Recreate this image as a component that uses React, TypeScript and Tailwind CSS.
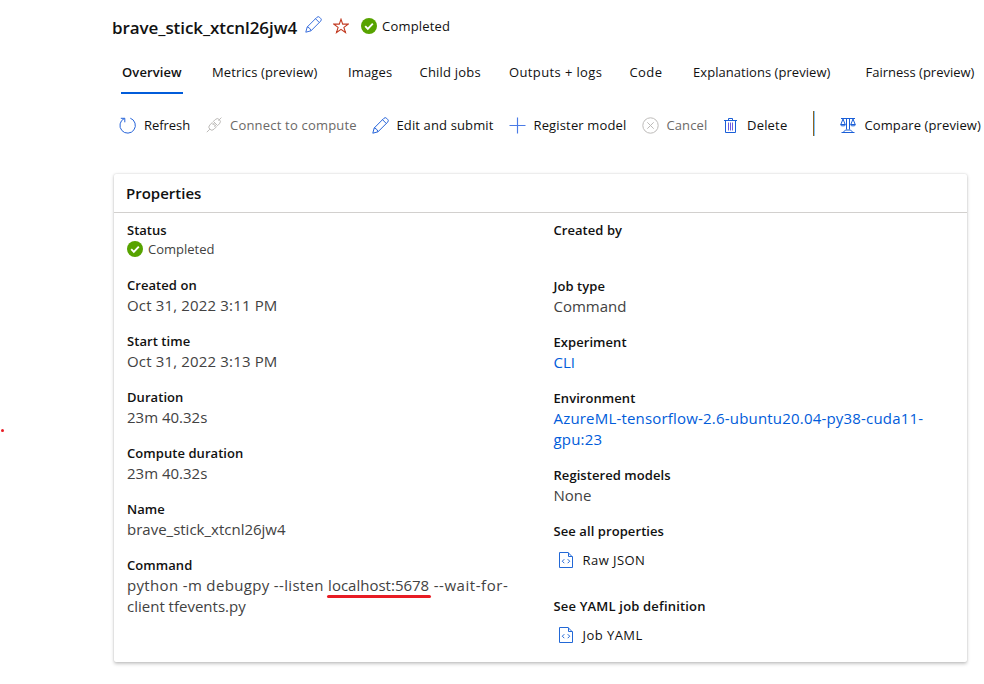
import type { ReactNode } from "react";

type IconProps = { className?: string };

function Pencil({ className = "" }: IconProps) {
  return (
    <svg className={className} width="17" height="17" viewBox="0 0 17 17" fill="none" stroke="currentColor" strokeWidth="1">
      <path d="M.8 16.2 2.2 11 11.8 1.4a2 2 0 0 1 2.9 0l.9.9a2 2 0 0 1 0 2.9L6 14.8Z" />
      <path d="m10.5 2.7 3.8 3.8M2.2 11l1.8.6.4 1 1 .4.6 1.8" />
    </svg>
  );
}

function Star() {
  return (
    <svg width="16" height="16" viewBox="0 0 16 16" fill="none" stroke="#c23b22" strokeWidth="1.1">
      <path d="M8 1.2 9.7 6.1H15.2l-4.3 3.3 1.6 5.1L8 11.3l-4.5 3.2 1.6-5.1L.8 6.1h5.5Z" />
    </svg>
  );
}

function Done() {
  return (
    <svg width="16" height="16" viewBox="0 0 16 16" fill="none">
      <circle cx="8" cy="8" r="8" fill="#57a300" />
      <path d="m4.2 8.2 2.6 2.6 5-5.2" stroke="#fff" strokeWidth="1.9" />
    </svg>
  );
}

function Refresh() {
  return (
    <svg width="17" height="17" viewBox="0 0 17 17" fill="none" stroke="#2563d9" strokeWidth="1">
      <path d="M11.3 1.2A7.7 7.7 0 1 1 5.3 1.5M1.8 1.3h4v4" />
    </svg>
  );
}

function Plug() {
  return (
    <svg width="16" height="16" viewBox="0 0 16 16" fill="none" stroke="#bdbbb9" strokeWidth="1">
      <path d="m.8 15.2 3-3M12.4 3.6l3-3M6.2 5.6 3.8 8a2.9 2.9 0 0 0 0 4.2 2.9 2.9 0 0 0 4.2 0l2.4-2.4ZM7.4 4.4 9.2 2.6a2.9 2.9 0 0 1 4.2 0 2.9 2.9 0 0 1 0 4.2l-1.8 1.8ZM6.6 8l1.6-1.6M8.2 9.6 9.8 8" />
    </svg>
  );
}

function Plus() {
  return (
    <svg width="17" height="17" viewBox="0 0 17 17" fill="none" stroke="#4a7be6" strokeWidth="1.15">
      <path d="M.5 8.5h16M8.5.5v16" />
    </svg>
  );
}

function CancelIcon() {
  return (
    <svg width="17" height="17" viewBox="0 0 17 17" fill="none" stroke="#bdbbb9" strokeWidth="1">
      <circle cx="8.5" cy="8.5" r="7.7" />
      <path d="m5.3 5.3 6.4 6.4m0-6.4-6.4 6.4" />
    </svg>
  );
}

function Trash() {
  return (
    <svg width="13" height="17" viewBox="0 0 13 17" fill="none" stroke="#1a5fd8" strokeWidth="1">
      <path d="M0 3.5h13M4.5 3V1.5h4V3M1.5 3.5v12h10v-12" />
      <path d="M4.5 5.5v8M6.5 5.5v8M8.5 5.5v8" stroke="#6a5be0" />
    </svg>
  );
}

function Scales() {
  return (
    <svg width="16" height="16" viewBox="0 0 16 16" fill="none" stroke="#1a5fd8" strokeWidth="1">
      <path d="M1 1.5h14M6.5 1.5v11M9.5 1.5v11M3 2 1 7M3 2l2 5M13 2l-2 5M13 2l2 5M.5 7.5h5l-.9 1.3H1.4ZM10.5 7.5h5l-.9 1.3h-3.2ZM1.5 15.5h13M3.5 15l2-2h5l2 2" />
    </svg>
  );
}

function CodeFile() {
  return (
    <svg width="14" height="16" viewBox="0 0 14 16" fill="none" stroke="#2268d6" strokeWidth="1">
      <path d="M.5.5H9l4.5 4.5v10.5H.5ZM9.5 .5V4.5h4M5.3 7.2 3.3 9.2l2 2M8.7 7.2l2 2-2 2" />
    </svg>
  );
}

const tabs = [
  { label: "Overview", cls: "w-[60px] mr-[30px] font-semibold tracking-[0.1px]" },
  { label: "Metrics (preview)", cls: "w-[106px] mr-[30px] tracking-[0.12px]" },
  { label: "Images", cls: "w-[45px] mr-[26.5px] tracking-[0.15px]" },
  { label: "Child jobs", cls: "w-[62px] mr-[27.5px] tracking-[0.2px]" },
  { label: "Outputs + logs", cls: "w-[94px] mr-[26.5px] tracking-[0.38px]" },
  { label: "Code", cls: "w-[33px] mr-[30.5px] tracking-[0.4px]" },
  { label: "Explanations (preview)", cls: "w-[138px] mr-[34.5px] tracking-[0.05px]" },
  { label: "Fairness (preview)", cls: "w-[110px]" },
];

function Tool({ icon, children, cls, off }: { icon: ReactNode; children: string; cls: string; off?: boolean }) {
  return (
    <button className={`flex shrink-0 items-center whitespace-nowrap ${off ? "text-[#6b6967]" : "text-[#111]"} ${cls}`}>
      {icon}
      <span className="pt-px">{children}</span>
    </button>
  );
}

function Field({ label, children, cls = "" }: { label: string; children?: ReactNode; cls?: string }) {
  return (
    <div className="mb-[15px]">
      <dt className="h-5 leading-5 font-semibold tracking-[0.06px] whitespace-nowrap text-[#111]">{label}</dt>
      <dd className={`min-h-[21px] text-[15px] leading-[21px] text-[#424242] ${cls}`}>{children}</dd>
    </div>
  );
}

export default function App() {
  return (
    <div className="relative h-[684px] w-[984px] overflow-hidden bg-white pl-[112px] font-['Open_Sans','Noto_Sans',sans-serif] text-[13px] text-[#111]">
      <header className="flex h-[52px] items-center">
        <h1 className="w-[193px] pt-[3px] text-[17px] leading-6 font-semibold tracking-[-0.08px] whitespace-nowrap">brave_stick_xtcnl26jw4</h1>
        <Pencil className="mr-[11px] mb-[3px] text-[#3a6fdd]" />
        <Star />
        <span className="ml-3 flex items-center gap-[5px] tracking-[0.2px]"><Done /><span className="pt-px">Completed</span></span>
      </header>

      <nav className="flex h-[42px] pl-[10px]">
        {tabs.map((t, i) => (
          <a key={t.label} className={`relative block shrink-0 leading-10 whitespace-nowrap ${t.cls}`}>
            {t.label}
            {i === 0 && <span className="absolute -right-px bottom-0 -left-px h-0.5 bg-[#015cda]" />}
          </a>
        ))}
      </nav>

      <div className="flex h-[62px] items-center pl-[7px]">
        <Tool cls="w-[87px] gap-2 tracking-[-0.05px]" icon={<Refresh />}>Refresh</Tool>
        <Tool cls="w-[166px] gap-2 tracking-[0.2px]" off icon={<Plug />}>Connect to compute</Tool>
        <Tool cls="w-[137px] gap-[7.5px] tracking-[0.13px]" icon={<Pencil className="text-[#2563d9]" />}>Edit and submit</Tool>
        <Tool cls="w-[133px] gap-[7.5px] tracking-[0.15px]" icon={<Plus />}>Register model</Tool>
        <Tool cls="w-[82px] gap-[7.5px] tracking-[0.1px]" off icon={<CancelIcon />}>Cancel</Tool>
        <Tool cls="w-[89px] gap-[10px] tracking-[0.2px]" icon={<Trash />}>Delete</Tool>
        <span className="mr-[25px] mb-[3px] h-[25px] w-0.5 shrink-0 border-r border-[#7cc3fb] bg-[#93621f]" />
        <Tool cls="gap-[8.5px] tracking-[0.11px]" icon={<Scales />}>Compare (preview)</Tool>
      </div>

      <section className="mt-[18px] ml-[2px] h-[488px] w-[853px] rounded-[2px] bg-white shadow-[0_1.6px_3.6px_rgba(0,0,0,0.22),0_0_2px_rgba(0,0,0,0.12)]">
        <h2 className="h-[39px] border-b border-[#d2d0ce] pl-3 text-[15px] leading-[38px] font-semibold">Properties</h2>
        <div className="flex pt-[7px] pl-[13px]">
          <dl className="w-[426.5px]">
            <div className="mb-4">
              <dt className="h-[19px] leading-5 font-semibold">Status</dt>
              <dd className="flex h-5 items-center gap-[5px] text-[#424242]"><Done /><span className="pt-px">Completed</span></dd>
            </div>
            <Field label="Created on" cls="tracking-[0.16px]">Oct 31, 2022 3:11 PM</Field>
            <Field label="Start time" cls="tracking-[0.16px]">Oct 31, 2022 3:13 PM</Field>
            <Field label="Duration">23m 40.32s</Field>
            <Field label="Compute duration">23m 40.32s</Field>
            <Field label="Name">brave_stick_xtcnl26jw4</Field>
            <Field label="Command">
              <span className="tracking-[0.34px]">python -m debugpy --listen </span>
              <span className="relative">
                localhost:5678
                <span className="absolute -right-[2px] -bottom-[3px] -left-px h-[3px] rounded-full bg-[#e81c24]" />
              </span>
              <span className="tracking-[0.55px]"> --wait-for-</span>
              <br />
              <span>client tfevents.py</span>
            </Field>
          </dl>
          <dl className="w-[400px]">
            <Field label="Created by" />
            <Field label="Job type">Command</Field>
            <Field label="Experiment"><a className="text-[#015cda]">CLI</a></Field>
            <Field label="Environment" cls="tracking-[0.19px]">
              <a className="text-[#015cda]">AzureML-tensorflow-2.6-ubuntu20.04-py38-cuda11-<br />gpu:23</a>
            </Field>
            <Field label="Registered models">None</Field>
            <div className="mb-[26px]">
              <dt className="h-5 leading-5 font-semibold tracking-[0.08px]">See all properties</dt>
              <dd className="mt-[9px] flex h-5 items-center gap-[9.5px] pl-[5.5px] tracking-[0.45px]"><CodeFile /><span className="pt-px">Raw JSON</span></dd>
            </div>
            <div>
              <dt className="h-5 leading-5 font-semibold tracking-[0.18px]">See YAML job definition</dt>
              <dd className="mt-[9px] flex h-5 items-center gap-[9.5px] pl-[5.5px] tracking-[0.45px]"><CodeFile /><span className="pt-px">Job YAML</span></dd>
            </div>
          </dl>
        </div>
      </section>

      <span className="absolute top-[429px] left-[1px] size-[3px] rounded-full bg-[#e81c24]" />
    </div>
  );
}
